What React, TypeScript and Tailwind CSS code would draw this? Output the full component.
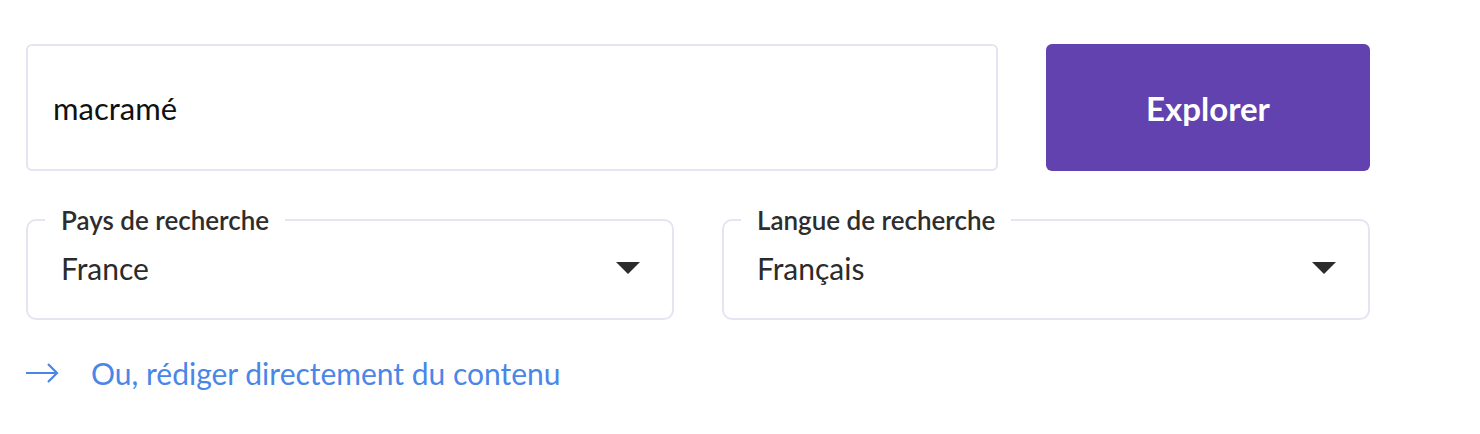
const font = { fontFamily: "Lato, 'Noto Sans', sans-serif" };

function Caret() {
  return (
    <svg width="24" height="12" viewBox="0 0 24 12" className="shrink-0">
      <path d="M0 0 L24 0 L12 12 Z" fill="#2b2b2b" />
    </svg>
  );
}

function SelectBox({ label, value }: { label: string; value: string }) {
  return (
    <fieldset className="flex-1 rounded-[10px] border-2 border-[#e6e4f2] pl-[17px] pr-[32px] pb-[33px] pt-0 min-w-0">
      <legend className="px-[16px] text-[26px] font-semibold leading-[30px] text-[#2d2d2d]">
        {label}
      </legend>
      <div className="flex items-center justify-between pl-[16px] pt-[16px]">
        <span className="text-[30px] leading-[34px] text-[#2b2b2b]">{value}</span>
        <Caret />
      </div>
    </fieldset>
  );
}

export default function App() {
  return (
    <div className="bg-white w-[1480px] h-[434px] pt-[44px] pl-[26px]" style={font}>
      <div className="flex gap-[48px] w-[1344px]">
        <div className="flex-1 h-[127px] rounded-[6px] border-2 border-[#e6e4f2] flex items-center pl-[25px]">
          <span className="text-[31px] leading-[36px] text-[#111]">macramé</span>
        </div>
        <button className="w-[324px] h-[127px] rounded-[6px] bg-[#6142ae] text-white text-[33px] leading-[40px] font-bold">
          Explorer
        </button>
      </div>
      <div className="flex gap-[48px] w-[1344px] mt-[34px]">
        <SelectBox label="Pays de recherche" value="France" />
        <SelectBox label="Langue de recherche" value="Français" />
      </div>
      <a className="mt-[35px] flex items-center gap-[32px] text-[#4a86e8] text-[30px] leading-[36px]" href="#">
        <svg width="33" height="20" viewBox="0 0 33 20" fill="none" stroke="#4a86e8" strokeWidth="2.2">
          <path d="M0 10 H31 M22 1 L31 10 L22 19" />
        </svg>
        <span>Ou, rédiger directement du contenu</span>
      </a>
    </div>
  );
}
